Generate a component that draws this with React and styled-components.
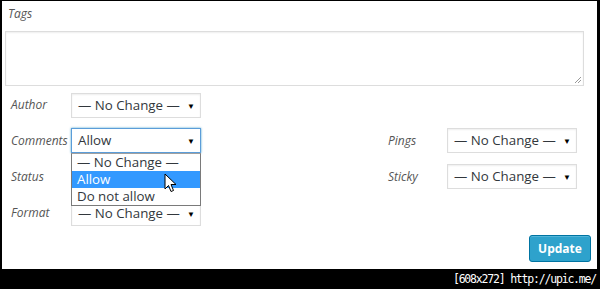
import React from 'react'
import styled, { createGlobalStyle } from 'styled-components'

const Global = createGlobalStyle`
  html, body { margin: 0; padding: 0; background: #000; }
  body { font-family: "Open Sans", "Noto Sans", sans-serif; }
  * { box-sizing: border-box; }
`

const Frame = styled.div`
  width: 600px;
  height: 289px;
  display: flex;
  flex-direction: column;
  background: #000;
`

const Panel = styled.div`
  margin: 1px 3px 0 2px;
  height: 268px;
  background: #fff;
  padding: 4px 6px 0 3px;
  display: flex;
  flex-direction: column;
`

const Caption = styled.span`
  font-size: 12px;
  font-style: italic;
  color: #555;
  line-height: 18px;
  white-space: nowrap;
  padding-left: ${p => p.$indent || 0}px;
`

const TextArea = styled.div`
  position: relative;
  margin-top: 8px;
  width: 579px;
  height: 55px;
  border: 1px solid #ddd;
  box-shadow: inset 0 1px 2px rgba(0,0,0,0.07);
`

const Grip = styled.svg`
  position: absolute;
  right: 1px;
  bottom: 1px;
`

const Fields = styled.div`
  margin-top: 6px;
  padding-left: 6px;
  display: grid;
  grid-template-columns: 60px 130px 187px 59px 130px;
  grid-template-rows: 25px 25px 25px 25px;
  row-gap: 11px;
  align-items: center;
`

const Label = styled(Caption)`
  grid-column: ${p => p.$col};
`

const Slot = styled.div`
  grid-column: ${p => p.$col};
  position: relative;
  height: 25px;
  top: ${p => p.$shift || 0}px;
`

const SelectBox = styled.div`
  height: 25px;
  border: 1px solid ${p => (p.$focused ? '#5b9dd9' : '#ddd')};
  box-shadow: ${p => (p.$focused ? '0 0 2px rgba(30,140,190,0.8)' : 'inset 0 1px 2px rgba(0,0,0,0.07)')};
  background: #fff;
  display: flex;
  align-items: center;
  justify-content: space-between;
  padding: 0 5px 0 6px;
  font-size: 13.3px;
  color: #32373c;
  line-height: 1;
  white-space: nowrap;
`

const Value = styled.span`
  visibility: ${p => (p.$hidden ? 'hidden' : 'visible')};
`

const Arrow = styled.span`
  font-size: 8px;
  color: #000;
`

const Options = styled.ul`
  position: absolute;
  top: 25px;
  left: 0;
  width: 130px;
  margin: 0;
  padding: 0;
  list-style: none;
  background: #fff;
  border: 1px solid #7a7a7a;
  border-top-color: #a0a0a0;
  z-index: 2;
`

const Option = styled.li`
  height: 17px;
  line-height: 16px;
  padding-left: 5px;
  font-size: 13.3px;
  white-space: nowrap;
  color: ${p => (p.$active ? '#fff' : '#32373c')};
  background: ${p => (p.$active ? '#3399ff' : '#fff')};
`

const Pointer = styled.svg`
  position: absolute;
  left: 93px;
  top: 45px;
  z-index: 3;
`

const Actions = styled.div`
  margin-top: 10px;
  display: flex;
  justify-content: flex-end;
`

const Button = styled.button`
  width: 62px;
  height: 27px;
  border: 1px solid #0074a2;
  border-radius: 3px;
  background: #2ea2cc;
  box-shadow: inset 0 1px 0 rgba(120,200,230,0.5);
  color: #fff;
  font-family: "Open Sans", "Noto Sans", sans-serif;
  font-weight: 700;
  font-size: 12px;
  padding: 0;
`

const Footer = styled.div`
  flex: 1;
  display: flex;
  align-items: center;
  justify-content: flex-end;
  padding-right: 4px;
  color: #fff;
  font-family: "DejaVu Sans Mono", monospace;
  font-size: 11.5px;
  letter-spacing: -1.2px;
`

const Select = ({ value, focused, covered }) => (
  <SelectBox $focused={focused}>
    <Value $hidden={covered}>{value}</Value>
    <Arrow>▼</Arrow>
  </SelectBox>
)

const NC = '— No Change —'

export default function App() {
  return (
    <Frame>
      <Global />
      <Panel>
        <Caption $indent={3}>Tags</Caption>
        <TextArea>
          <Grip width="9" height="9" viewBox="0 0 9 9">
            <path d="M8 2 L2 8 M8 5 L5 8" stroke="#999" strokeWidth="1" />
          </Grip>
        </TextArea>
        <Fields>
          <Label $col={1}>Author</Label>
          <Slot $col={2} $shift={1}><Select value={NC} /></Slot>

          <Label $col={1}>Comments</Label>
          <Slot $col={2}>
            <Select value="Allow" focused />
            <Options>
              <Option>{NC}</Option>
              <Option $active>Allow</Option>
              <Option>Do not allow</Option>
            </Options>
            <Pointer width="13" height="20" viewBox="0 0 13 20">
              <path d="M1 1 L1 16 L4.5 12.5 L7 18.5 L9.5 17.5 L7 11.5 L12 11.5 Z" fill="#fff" stroke="#000" strokeWidth="1" strokeLinejoin="round" />
            </Pointer>
          </Slot>
          <Label $col={4}>Pings</Label>
          <Slot $col={5}><Select value={NC} /></Slot>

          <Label $col={1}>Status</Label>
          <Slot $col={2}><Select value={NC} covered /></Slot>
          <Label $col={4}>Sticky</Label>
          <Slot $col={5}><Select value={NC} /></Slot>

          <Label $col={1}>Format</Label>
          <Slot $col={2} $shift={1}><Select value={NC} /></Slot>
        </Fields>
        <Actions>
          <Button>Update</Button>
        </Actions>
      </Panel>
      <Footer>[608x272] http://upic.me/</Footer>
    </Frame>
  )
}
